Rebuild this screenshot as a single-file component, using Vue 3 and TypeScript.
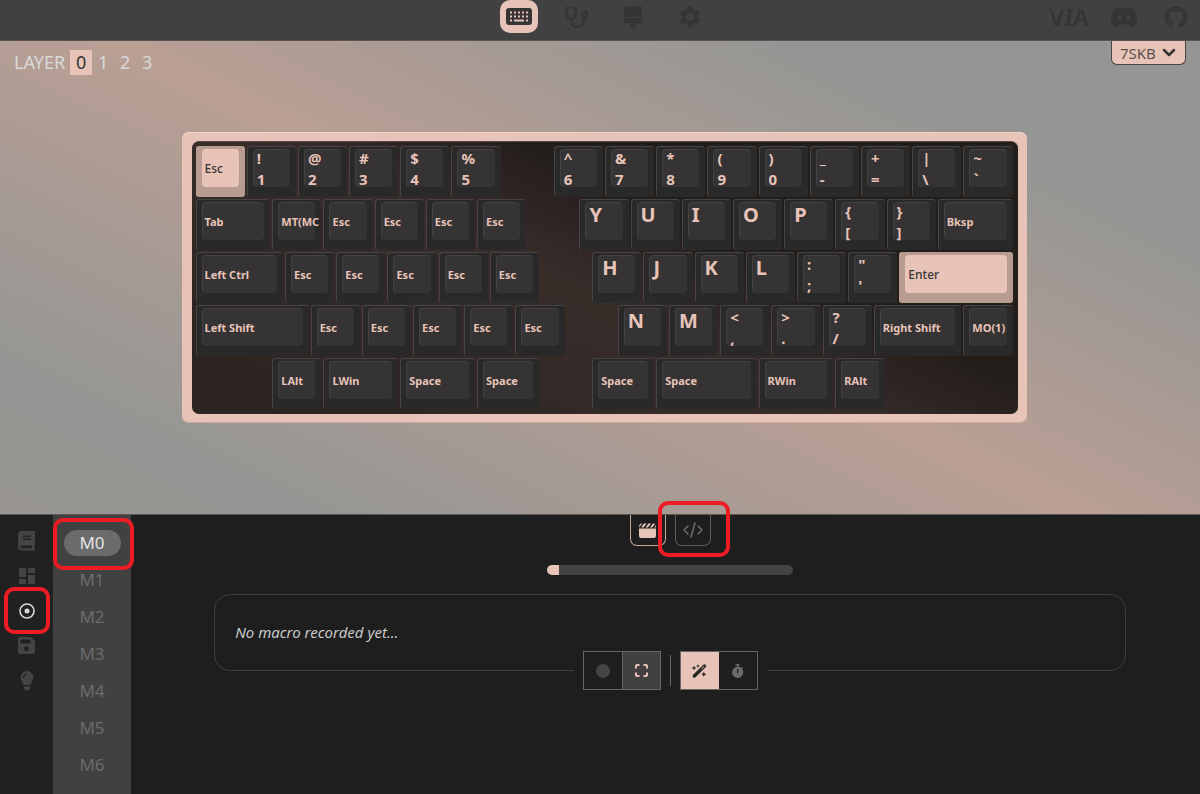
<script setup lang="ts">
import { ref } from 'vue'

interface Key {
  start: number
  span: number
  top?: string
  bottom?: string
  kind: 'word' | 'pair' | 'letter'
  accent?: boolean
}

const word = (start: number, span: number, top: string, accent = false): Key => ({ start, span, top, kind: 'word', accent })
const letter = (start: number, top: string): Key => ({ start, span: 4, top, kind: 'letter' })
const pair = (start: number, top: string, bottom: string): Key => ({ start, span: 4, top, bottom, kind: 'pair' })
const escRun = (from: number, count: number): Key[] =>
  Array.from({ length: count }, (_, i) => word(from + i * 4, 4, 'Esc'))

/* Positions and widths are in quarter key units; a row is 64 quarters wide. */
const rows: Key[][] = [
  [
    word(0, 4, 'Esc', true),
    pair(4, '!', '1'), pair(8, '@', '2'), pair(12, '#', '3'), pair(16, '$', '4'), pair(20, '%', '5'),
    pair(28, '^', '6'), pair(32, '&', '7'), pair(36, '*', '8'), pair(40, '(', '9'), pair(44, ')', '0'),
    pair(48, '_', '-'), pair(52, '+', '='), pair(56, '|', '\\'), pair(60, '~', '`'),
  ],
  [
    word(0, 6, 'Tab'), word(6, 4, 'MT(MC'), ...escRun(10, 4),
    letter(30, 'Y'), letter(34, 'U'), letter(38, 'I'), letter(42, 'O'), letter(46, 'P'),
    pair(50, '{', '['), pair(54, '}', ']'), word(58, 6, 'Bksp'),
  ],
  [
    word(0, 7, 'Left Ctrl'), ...escRun(7, 5),
    letter(31, 'H'), letter(35, 'J'), letter(39, 'K'), letter(43, 'L'),
    pair(47, ':', ';'), pair(51, '"', "'"), word(55, 9, 'Enter', true),
  ],
  [
    word(0, 9, 'Left Shift'), ...escRun(9, 5),
    letter(33, 'N'), letter(37, 'M'),
    pair(41, '<', ','), pair(45, '>', '.'), pair(49, '?', '/'),
    word(53, 7, 'Right Shift'), word(60, 4, 'MO(1)'),
  ],
  [
    word(6, 4, 'LAlt'), word(10, 6, 'LWin'), word(16, 6, 'Space'), word(22, 5, 'Space'),
    word(31, 5, 'Space'), word(36, 8, 'Space'), word(44, 6, 'RWin'), word(50, 4, 'RAlt'),
  ],
]

const layers = [0, 1, 2, 3]
const layer = ref(0)
const macros = ['M0', 'M1', 'M2', 'M3', 'M4', 'M5', 'M6']
const macro = ref('M0')
const board = ref('7SKB')
</script>

<template>
  <div class="app">
    <header class="topbar">
      <nav class="tabs" aria-label="Sections">
        <a href="#configure" class="tab active" aria-label="Configure">
          <svg width="26" height="17" viewBox="0 0 26 17">
            <rect x="1" y="1" width="24" height="15" rx="2" fill="none" stroke="currentColor" stroke-width="2" />
            <path d="M2 2h22v13H2zM4 3.500v2h2v-2zM8 3.500v2h2v-2zM12 3.500v2h2v-2zM16 3.500v2h2v-2zM20 3.500v2h2v-2zM4 7.500v2h2v-2zM8 7.500v2h2v-2zM12 7.500v2h2v-2zM16 7.500v2h2v-2zM20 7.500v2h2v-2zM4 11.500v2h2v-2zM8 11.500v2h10v-2zM20 11.500v2h2v-2z" fill="currentColor" fill-rule="evenodd" />
          </svg>
        </a>
        <a href="#test" class="tab" aria-label="Key tester">
          <svg width="24" height="24" viewBox="0 0 24 24" fill="none" stroke="currentColor" stroke-width="2.500" stroke-linecap="round" stroke-linejoin="round">
            <path d="M5 2.500L2.500 3.200V8c0 3.500 2 6 4.800 6S12 11.500 12 8V3.200L9.500 2.500M7.300 14v2.500c0 3.300 2.300 5.500 6 5.500s6.700-2.200 6.700-5.500V12.500" />
            <circle cx="20.500" cy="9.500" r="2.500" />
          </svg>
        </a>
        <a href="#design" class="tab" aria-label="Design">
          <svg width="20" height="24" viewBox="0 0 20 24" fill="currentColor" fill-rule="evenodd">
            <path d="M3 1l1.500 2L6 1h2l1 3.500L10 1h2l1 2.500L14 1h3a2 2 0 012 2v9H1V3a2 2 0 012-2z" />
            <path d="M1 13h18v3c0 1.500-1 2.500-2.500 2.500H13V21a3 3 0 01-6 0v-2.500H3.500C2 18.500 1 17.500 1 16zM10 20a1 1 0 100 2 1 1 0 000-2z" />
          </svg>
        </a>
        <a href="#settings" class="tab" aria-label="Settings">
          <svg width="24" height="24" viewBox="1 1 22 22" fill="currentColor">
            <path d="M19.140 12.940c.04-.3.06-.61.06-.94 0-.32-.02-.64-.07-.94l2.030-1.580c.18-.14.23-.41.12-.61l-1.920-3.320c-.12-.22-.37-.29-.59-.22l-2.390.96c-.5-.38-1.030-.7-1.620-.94l-.36-2.540c-.04-.24-.24-.41-.48-.41h-3.840c-.24 0-.43.17-.47.41l-.36 2.540c-.59.24-1.130.57-1.620.94l-2.390-.96c-.22-.08-.47 0-.59.22L2.740 8.870c-.12.21-.08.47.12.61l2.030 1.580c-.05.3-.09.63-.09.94s.02.64.07.94l-2.030 1.580c-.18.14-.23.41-.12.61l1.920 3.320c.12.22.37.29.59.22l2.390-.96c.5.38 1.030.7 1.620.94l.36 2.540c.05.24.24.41.48.41h3.840c.24 0 .44-.17.47-.41l.36-2.540c.59-.24 1.130-.56 1.620-.94l2.390.96c.22.08.47 0 .59-.22l1.920-3.320c.12-.22.07-.47-.12-.61l-2.010-1.580zM12 15.600c-1.980 0-3.600-1.620-3.600-3.600s1.620-3.600 3.600-3.600 3.600 1.620 3.600 3.600-1.620 3.600-3.600 3.600z" />
          </svg>
        </a>
      </nav>
      <div class="links">
        <a href="#via" class="via">V<i>I</i>A</a>
        <a href="#discord" aria-label="Discord">
          <svg width="26" height="26" viewBox="0 0 24 24" fill="currentColor">
            <path d="M20.317 4.370a19.791 19.791 0 00-4.885-1.515.074.074 0 00-.079.037c-.211.375-.445.865-.608 1.250-1.845-.276-3.680-.276-5.487 0-.164-.393-.406-.874-.618-1.250a.077.077 0 00-.079-.037 19.736 19.736 0 00-4.885 1.515.07.07 0 00-.032.028C.533 9.046-.319 13.580.099 18.058a.082.082 0 00.031.056c2.053 1.508 4.041 2.423 5.993 3.029a.078.078 0 00.084-.028c.462-.630.873-1.295 1.226-1.994a.076.076 0 00-.042-.106c-.653-.248-1.274-.550-1.872-.892a.077.077 0 01-.008-.128c.126-.094.252-.192.372-.291a.074.074 0 01.078-.011c3.928 1.793 8.180 1.793 12.061 0a.074.074 0 01.079.010c.120.099.246.198.373.292a.077.077 0 01-.007.128 12.299 12.299 0 01-1.873.891.077.077 0 00-.041.107c.360.698.772 1.363 1.225 1.993a.076.076 0 00.084.029c1.961-.607 3.950-1.522 6.002-3.029a.077.077 0 00.031-.055c.500-5.177-.838-9.674-3.549-13.660a.061.061 0 00-.031-.029zM8.020 15.331c-1.183 0-2.157-1.086-2.157-2.419 0-1.333.956-2.419 2.157-2.419 1.211 0 2.176 1.095 2.157 2.419 0 1.333-.956 2.419-2.157 2.419zm7.975 0c-1.183 0-2.157-1.086-2.157-2.419 0-1.333.955-2.419 2.157-2.419 1.211 0 2.176 1.095 2.157 2.419 0 1.333-.946 2.419-2.157 2.419z" />
          </svg>
        </a>
        <a href="#github" aria-label="GitHub">
          <svg width="22" height="22" viewBox="0 0 24 24" fill="currentColor">
            <path d="M12 .297c-6.630 0-12 5.373-12 12 0 5.303 3.438 9.800 8.205 11.385.6.113.82-.258.82-.577 0-.285-.01-1.040-.015-2.040-3.338.724-4.042-1.610-4.042-1.610C4.422 18.070 3.633 17.700 3.633 17.700c-1.087-.744.084-.729.084-.729 1.205.084 1.838 1.236 1.838 1.236 1.070 1.835 2.809 1.305 3.495.998.108-.776.417-1.305.76-1.605-2.665-.3-5.466-1.332-5.466-5.930 0-1.310.465-2.380 1.235-3.220-.135-.303-.54-1.523.105-3.176 0 0 1.005-.322 3.300 1.230.96-.267 1.980-.399 3-.405 1.020.006 2.040.138 3 .405 2.280-1.552 3.285-1.230 3.285-1.230.645 1.653.24 2.873.12 3.176.765.84 1.230 1.910 1.230 3.220 0 4.610-2.805 5.625-5.475 5.920.42.36.81 1.096.81 2.220 0 1.606-.015 2.896-.015 3.286 0 .315.21.69.825.57C20.565 22.092 24 17.592 24 12.297c0-6.627-5.373-12-12-12" />
          </svg>
        </a>
      </div>
    </header>

    <section class="stage">
      <div class="stage-bar">
        <div class="layers">
          <span>LAYER</span>
          <button v-for="n in layers" :key="n" type="button" :class="{ active: layer === n }" @click="layer = n">{{ n }}</button>
        </div>
        <label class="picker">
          <select v-model="board" aria-label="Keyboard">
            <option>7SKB</option>
          </select>
          <svg width="14" height="9" viewBox="0 0 14 9" fill="none" stroke="currentColor" stroke-width="2.500" stroke-linecap="round" stroke-linejoin="round">
            <path d="M2 2l5 5 5-5" />
          </svg>
        </label>
      </div>
      <div class="case">
        <div class="plate">
          <div v-for="(row, r) in rows" :key="r" class="row">
            <button
              v-for="key in row"
              :key="key.start"
              type="button"
              class="key"
              :class="[key.kind, { accent: key.accent }]"
              :style="{ gridColumn: `${key.start + 1} / span ${key.span}` }"
            >
              <span class="cap">
                <span>{{ key.top }}</span>
                <span v-if="key.bottom">{{ key.bottom }}</span>
              </span>
            </button>
          </div>
        </div>
      </div>
    </section>

    <section class="panel">
      <nav class="rail" aria-label="Tools">
        <button type="button" aria-label="Keymap">
          <svg width="18" height="20" viewBox="0 0 18 20" fill="currentColor" fill-rule="evenodd">
            <path d="M3.500 0H16a1 1 0 011 1v12.500a1 1 0 01-.6 1v3H17V19.500H3.500A3.500 3.500 0 010 16V3.500A3.500 3.500 0 013.500 0zM5 4.500V6h8V4.500zM5 7.500V9h8V7.500zM3.500 14.500a1.300 1.300 0 000 2.700H14v-2.700z" />
          </svg>
        </button>
        <button type="button" aria-label="Layouts">
          <svg width="16" height="16" viewBox="0 0 16 16" fill="currentColor">
            <path d="M0 0h7v9H0zM9 0h7v5H9zM0 11h7v5H0zM9 7h7v9H9z" />
          </svg>
        </button>
        <button type="button" class="active marked" aria-label="Macros">
          <svg width="16" height="16" viewBox="0 0 16 16">
            <circle cx="8" cy="8" r="7" fill="none" stroke="currentColor" stroke-width="1.600" />
            <circle cx="8" cy="8" r="2.500" fill="currentColor" />
          </svg>
        </button>
        <button type="button" aria-label="Save and load">
          <svg width="18" height="18" viewBox="0 0 18 18" fill="currentColor" fill-rule="evenodd">
            <path d="M2 0h11l4 4v11a2 2 0 01-2 2H2a2 2 0 01-2-2V2a2 2 0 012-2zM3.500 2.500A1 1 0 002.500 3.500v2a1 1 0 001 1h8a1 1 0 001-1v-2a1 1 0 00-1-1zM8.500 9.200a2.500 2.500 0 100 5 2.500 2.500 0 000-5z" />
          </svg>
        </button>
        <button type="button" aria-label="Lighting">
          <svg width="14" height="20" viewBox="0 0 14 20" fill="currentColor" fill-rule="evenodd">
            <path d="M7 0a6.500 6.500 0 016.500 6.500c0 3-2.500 4.500-3 7.500h-7c-.5-3-3-4.500-3-7.500A6.500 6.500 0 017 0zM7 2.500c-2.200 0-4 1.800-4 4h1.300A2.700 2.700 0 017 3.800zM3.700 15.500h6.600c0 2.500-1.300 4-3.300 4s-3.300-1.500-3.300-4z" />
          </svg>
        </button>
      </nav>
      <nav class="macros" aria-label="Macro slots">
        <button v-for="m in macros" :key="m" type="button" :class="{ active: macro === m, marked: m === 'M0' }" @click="macro = m">{{ m }}</button>
      </nav>
      <main class="editor">
        <div class="modes">
          <button type="button" class="mode active" aria-label="Recorder">
            <svg width="17" height="15" viewBox="0 0 17 15" fill="currentColor">
              <path d="M0 5.500h17V13a2 2 0 01-2 2H2a2 2 0 01-2-2zM0 4.500C0 2.500.5 1 2 .5h1.200zM2 4.500L5 .5h2.500l-3 4zM6.500 4.500l3-4H12l-3 4zM11 4.500l3-4h1.500l.5.5-2.700 3.500zM15.300 4.500L17 2v2.500z" />
            </svg>
          </button>
          <button type="button" class="mode marked" aria-label="Script">
            <svg width="20" height="16" viewBox="0 0 20 16" fill="none" stroke="currentColor" stroke-width="1.600" stroke-linecap="round" stroke-linejoin="round">
              <path d="M5 4L1 8l4 4M15 4l4 4-4 4M12 1L8 15" />
            </svg>
          </button>
        </div>
        <div class="meter" role="progressbar" aria-label="Macro memory" aria-valuenow="5" aria-valuemin="0" aria-valuemax="100"><div class="meter-fill"></div></div>
        <div class="sequence">No macro recorded yet...</div>
        <div class="toolbar">
          <div class="group">
            <button type="button" aria-label="Record">
              <svg width="14" height="14" viewBox="0 0 14 14"><circle cx="7" cy="7" r="7" fill="#444" /></svg>
            </button>
            <button type="button" class="raised" aria-label="Full screen">
              <svg width="13" height="13" viewBox="0 0 13 13" fill="none" stroke="currentColor" stroke-width="2">
                <path d="M1 4.500V2a1 1 0 011-1h2.500M8.500 1H11a1 1 0 011 1v2.500M12 8.500V11a1 1 0 01-1 1H8.500M4.500 12H2a1 1 0 01-1-1V8.500" />
              </svg>
            </button>
          </div>
          <div class="divider"></div>
          <div class="group">
            <button type="button" class="chosen" aria-label="Smart optimize">
              <svg width="15" height="14" viewBox="0 0 15 14">
                <path d="M2.300 12L12.500 2" stroke="currentColor" stroke-width="3.400" stroke-linecap="round" />
                <path d="M9.500 4.900L12.300 2.200" stroke="#e8c4b8" stroke-width="1" />
                <path d="M6 0l.6 1.400L8 2l-1.400.6L6 4l-.6-1.400L4 2l1.400-.6zM2 1.500l.7 1.800 1.800.7-1.800.7L2 6.500l-.7-1.800L-.5 4l1.800-.7zM11.800 7.500l.8 2 2 .8-2 .8-.8 2-.8-2-2-.8 2-.8z" fill="currentColor" />
              </svg>
            </button>
            <button type="button" class="timer" aria-label="Record delays">
              <svg width="12" height="14" viewBox="0 0 12 14" fill="currentColor" fill-rule="evenodd">
                <path d="M3.500 0h4v1.500h-1v1.200a5.500 5.500 0 012.700 1.100l.9-.9 1.100 1.100-.9 1A5.600 5.600 0 115 2.700V1.500H3.500zM5 5v4h1.300V5z" />
              </svg>
            </button>
          </div>
        </div>
      </main>
    </section>
  </div>
</template>

<style>
body {
  margin: 0;
  background: #1e1e1e;
}
</style>

<style scoped>
.app {
  display: flex;
  flex-direction: column;
  height: 100vh;
  font-family: "Noto Sans", "Open Sans", sans-serif;
}

.app *,
.app *::after {
  box-sizing: border-box;
}

button {
  padding: 0;
  border: 0;
  background: none;
  color: inherit;
  font: inherit;
  cursor: pointer;
}

a {
  color: inherit;
  text-decoration: none;
}

svg {
  display: block;
  overflow: visible;
}

.marked {
  position: relative;
}

.marked::after {
  content: "";
  position: absolute;
  z-index: 2;
  inset: -12px -11px;
  border: 4px solid #ed1c24;
  border-radius: 10px;
  pointer-events: none;
}

/* Top bar */
.topbar {
  display: grid;
  grid-template-columns: 1fr auto 1fr;
  height: 41px;
  flex: none;
  border-bottom: 1px solid #5a5352;
  background: #414141;
  color: #363434;
}

.tabs {
  grid-column: 2;
  display: flex;
  gap: 19px;
  padding-left: 9px;
}

.tab {
  display: grid;
  place-items: center;
  width: 38px;
  height: 33px;
}

.tab.active {
  border-radius: 10px;
  background: #e8c4b8;
  color: #363434;
}

.links {
  display: flex;
  justify-content: flex-end;
  align-items: center;
  gap: 22px;
  height: 33px;
  padding-right: 13px;
}

.via {
  font-size: 24px;
  font-weight: 600;
}

.links a:last-child {
  margin-left: 6px;
}

/* Keyboard stage */
.stage {
  flex: 1;
  min-height: 0;
  background: linear-gradient(26deg, #989592 0%, #959694 14%, #ba9f94 50%, #959694 80%, #959694 100%);
}

.stage-bar {
  display: flex;
  justify-content: space-between;
  align-items: flex-start;
  height: 91px;
  padding: 0 14px;
}

.layers {
  display: flex;
  align-items: center;
  padding-top: 9px;
  color: #d9d9d9;
  font-size: 18px;
  line-height: 25px;
}

.layers span {
  margin-right: 5px;
}

.layers button {
  width: 22px;
}

.layers .active {
  background: #e8c4b8;
  color: #363434;
}

.picker {
  display: flex;
  align-items: center;
  position: relative;
  height: 24px;
  border: 1px solid #4a4544;
  border-top: 0;
  border-radius: 0 0 6px 6px;
  background: #e8c4b8;
  color: #363434;
}

.picker select {
  appearance: none;
  width: 73px;
  height: 22px;
  padding: 0 0 0 8px;
  border: 0;
  background: none;
  color: #5d5150;
  font: 15px/20px "Noto Sans", sans-serif;
}

.picker svg {
  position: absolute;
  right: 9px;
  pointer-events: none;
}

.case {
  width: 71%;
  max-width: 845px;
  margin: 0 auto;
  padding: 9px 9px 9px 10px;
  position: relative;
  left: 4px;
  box-sizing: border-box;
  border-radius: 7px;
  background: #e8c4b8;
  box-shadow: inset 0 1px #f0d3c8, inset 0 -1px #cda99e;
}

.plate {
  display: grid;
  gap: 2px;
  padding: 4px 3px 5px 4px;
  border-top: 1px solid #57494a;
  border-radius: 7px;
  background: linear-gradient(26deg, #2c2422 0%, #2e2523 12%, #392d2a 46%, #241e1b 64%, #241e1b 100%);
}

.row {
  display: grid;
  grid-template-columns: repeat(64, minmax(0, 1fr));
}

.key {
  height: 51px;
  min-width: 0;
  margin-right: 2px;
  padding: 2px 6px 10px 5px;
  border: solid #464445;
  border-width: 1px 0 0 1px;
  border-radius: 3px;
  background: #292929;
  color: #e8c4b8;
  font-weight: 700;
  text-align: left;
}

.cap {
  display: flex;
  flex-direction: column;
  height: 38px;
  padding-left: 3px;
  border: solid #434142;
  border-width: 1px 0 0 1px;
  border-radius: 4px;
  background: #353334;
  white-space: nowrap;
}

.word .cap {
  justify-content: center;
  padding-left: 2px;
  font-size: 11px;
  line-height: 17px;
}

.pair .cap {
  justify-content: center;
  font-size: 15px;
  line-height: 21px;
}

.letter .cap {
  font-size: 20px;
  line-height: 23px;
}

.key.accent {
  border-color: #b99c91;
  background: #b99c91;
  color: #363434;
}

.accent .cap {
  border-color: #e8c4b8;
  background: #e8c4b8;
  font-size: 12px;
  font-weight: 500;
}

/* Lower panel */
.panel {
  display: flex;
  flex: none;
  height: 280px;
  border-top: 1px solid #5c5856;
  background: #1e1e1e;
}

.rail {
  display: flex;
  flex-direction: column;
  align-items: center;
  gap: 12px;
  width: 53px;
  padding-top: 14px;
  background: #212121;
  color: #444;
}

.rail button {
  display: grid;
  place-items: center;
  width: 24px;
  height: 23px;
}

.rail .active {
  color: #d9d9d9;
}

.macros {
  display: flex;
  flex-direction: column;
  align-items: center;
  gap: 11px;
  width: 78px;
  padding-top: 15px;
  background: #414141;
  color: #6b6b6b;
  font-size: 17px;
  line-height: 26px;
}

.macros button {
  width: 57px;
  height: 26px;
  border-radius: 13px;
}

.macros .active {
  background: #6b6b6b;
  color: #e3e3e3;
}

.macros .marked::after {
  inset: -12px -13px -14px -11px;
}

.editor {
  display: flex;
  flex: 1;
  flex-direction: column;
  align-items: center;
  padding-left: 9px;
}

.modes {
  display: flex;
  gap: 9px;
}

.mode {
  display: grid;
  place-items: center;
  width: 36px;
  height: 31px;
  border: 1px solid #5e5e5e;
  border-top: 0;
  border-radius: 0 0 7px 7px;
  color: #6b6b6b;
}

.mode.active {
  border-color: #c4a99f;
  color: #e8c4b8;
}

.mode.marked::after {
  inset: -14px -20px -12px -18px;
}

.meter {
  width: 246px;
  height: 10px;
  margin-top: 19px;
  overflow: hidden;
  border-radius: 5px;
  background: #434343;
}

.meter-fill {
  width: 5%;
  height: 100%;
  background: #e8c4b8;
}

.sequence {
  width: 86%;
  height: 77px;
  margin-top: 19px;
  padding-left: 20px;
  border: 1px solid #3f3f3f;
  border-radius: 16px;
  color: #c9c9c9;
  font-size: 15px;
  font-style: italic;
  line-height: 74px;
}

.toolbar {
  display: flex;
  align-items: center;
  gap: 9px;
  margin-top: -20px;
  padding: 0 9px;
  background: #1e1e1e;
}

.group {
  display: flex;
  border: 1px solid #666;
  color: #6b6b6b;
}

.group button {
  display: grid;
  place-items: center;
  width: 38px;
  height: 37px;
}

.group .raised {
  border-left: 1px solid #666;
  background: #414141;
  color: #e8c4b8;
}

.group .chosen {
  background: #e8c4b8;
  color: #2b2828;
}

.divider {
  width: 1px;
  height: 31px;
  background: #666;
}
</style>
